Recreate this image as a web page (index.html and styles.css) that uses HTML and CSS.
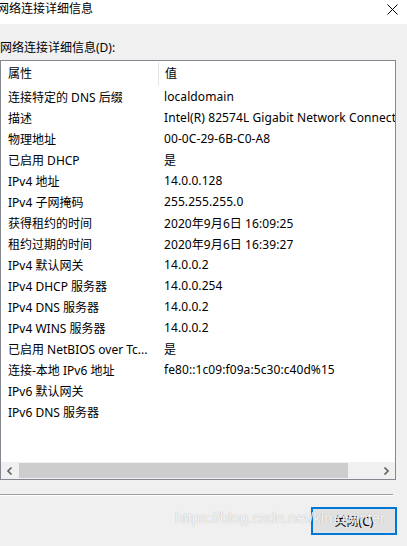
FILE: index.html
```html
<!DOCTYPE html>
<html lang="zh-CN">
<head>
<meta charset="utf-8">
<title>网络连接详细信息</title>
<link rel="stylesheet" href="styles.css">
</head>
<body>
<div class="window">
  <div class="titlebar">
    <span class="title">网络连接详细信息</span>
    <svg class="close" width="11" height="11" viewBox="0 0 11 11"><path d="M0.5 0.5L10.5 10.5M10.5 0.5L0.5 10.5" stroke="#000" stroke-width="1" fill="none"/></svg>
  </div>
  <div class="content">
    <div class="label">网络连接详细信息(D):</div>
    <div class="listbox">
      <div class="header">
        <div class="hcell">属性</div>
        <div class="hsep"></div>
        <div class="hcell val">值</div>
      </div>
      <div class="rows">
        <div class="row"><span class="k">连接特定的 DNS 后缀</span><span class="v">localdomain</span></div>
        <div class="row"><span class="k">描述</span><span class="v">Intel(R) 82574L Gigabit Network Connection</span></div>
        <div class="row"><span class="k">物理地址</span><span class="v">00-0C-29-6B-C0-A8</span></div>
        <div class="row"><span class="k">已启用 DHCP</span><span class="v">是</span></div>
        <div class="row"><span class="k">IPv4 地址</span><span class="v">14.0.0.128</span></div>
        <div class="row"><span class="k">IPv4 子网掩码</span><span class="v">255.255.255.0</span></div>
        <div class="row"><span class="k">获得租约的时间</span><span class="v">2020年9月6日 16:09:25</span></div>
        <div class="row"><span class="k">租约过期的时间</span><span class="v">2020年9月6日 16:39:27</span></div>
        <div class="row"><span class="k">IPv4 默认网关</span><span class="v">14.0.0.2</span></div>
        <div class="row"><span class="k">IPv4 DHCP 服务器</span><span class="v">14.0.0.254</span></div>
        <div class="row"><span class="k">IPv4 DNS 服务器</span><span class="v">14.0.0.2</span></div>
        <div class="row"><span class="k">IPv4 WINS 服务器</span><span class="v">14.0.0.2</span></div>
        <div class="row"><span class="k">已启用 NetBIOS over Tc...</span><span class="v">是</span></div>
        <div class="row"><span class="k">连接-本地 IPv6 地址</span><span class="v">fe80::1c09:f09a:5c30:c40d%15</span></div>
        <div class="row"><span class="k">IPv6 默认网关</span><span class="v"></span></div>
        <div class="row"><span class="k">IPv6 DNS 服务器</span><span class="v"></span></div>
      </div>
      <div class="hscroll">
        <svg class="arrow" width="8" height="8" viewBox="0 0 8 8"><path d="M5.5 0.5L2 4L5.5 7.5" stroke="#606060" stroke-width="1.6" fill="none"/></svg>
        <div class="track"><div class="thumb"></div></div>
        <svg class="arrow" width="8" height="8" viewBox="0 0 8 8"><path d="M2.5 0.5L6 4L2.5 7.5" stroke="#606060" stroke-width="1.6" fill="none"/></svg>
      </div>
    </div>
    <div class="divider"></div>
    <div class="footer">
      <button class="btn">关闭(C)</button>
      <span class="watermark">https://blog.csdn.net/kimowinter</span>
    </div>
  </div>
</div>
</body>
</html>
```
FILE: styles.css
```css
* { box-sizing: border-box; }
html, body { margin: 0; padding: 0; }
body {
  width: 407px;
  height: 546px;
  overflow: hidden;
  background: #f0f0f0;
  font-family: "Noto Sans", "Noto Sans CJK SC", sans-serif;
  font-size: 12px;
  color: #000;
}
.window { display: flex; flex-direction: column; height: 546px; }
.titlebar {
  height: 24px;
  background: #fff;
  display: flex;
  align-items: flex-start;
  justify-content: space-between;
  padding: 1px 9px 0 0;
}
.title { margin-left: -3px; line-height: 16px; }
.close { margin-top: 3px; }
.content { display: flex; flex-direction: column; padding: 0 11px 0 0; }
.label { margin-top: 16px; line-height: 16px; height: 20px; }
.listbox {
  width: 396px;
  height: 420px;
  border: 1px solid #828790;
  background: #fff;
  display: flex;
  flex-direction: column;
  overflow: hidden;
}
.header {
  height: 25px;
  display: flex;
  align-items: center;
  flex-shrink: 0;
}
.hcell { width: 157px; padding-left: 7px; line-height: 16px; }
.hcell.val { width: auto; padding-left: 6px; }
.hsep { width: 1px; height: 24px; background: #e5e5e5; align-self: flex-start; margin-top: 1px; }
.rows { flex: 1; }
.row {
  display: flex;
  height: 21px;
  align-items: center;
  white-space: nowrap;
}
.k { width: 163px; padding-left: 7px; flex-shrink: 0; }
.v { flex-shrink: 0; letter-spacing: 0.08px; }
.hscroll {
  height: 17px;
  background: #f0f0f0;
  display: flex;
  align-items: center;
  flex-shrink: 0;
}
.arrow { margin: 0 5px 0 5px; flex-shrink: 0; }
.track { flex: 1; height: 15px; display: flex; padding-right: 29px; }
.thumb { flex: 1; background: #cdcdcd; margin-left: 0; }
.divider {
  margin-top: 14px;
  width: 393px;
  height: 2px;
  border-top: 1px solid #a0a0a0;
  border-bottom: 1px solid #fff;
}
.footer {
  position: relative;
  display: flex;
  justify-content: flex-end;
  padding-top: 11px;
}
.btn {
  width: 86px;
  height: 28px;
  border: 2px solid #0078d7;
  background: #e1e1e1;
  font-family: inherit;
  font-size: 12px;
  color: #000;
  padding: 0;
  margin-right: -1px;
}
.watermark {
  position: absolute;
  right: 11px;
  top: 13px;
  font-family: "Liberation Sans", Arial, sans-serif;
  font-size: 15px;
  color: rgba(255,255,255,0.9);
  text-shadow: 0 0 1px rgba(110,110,110,0.6);
  pointer-events: none;
  white-space: nowrap;
}
```
